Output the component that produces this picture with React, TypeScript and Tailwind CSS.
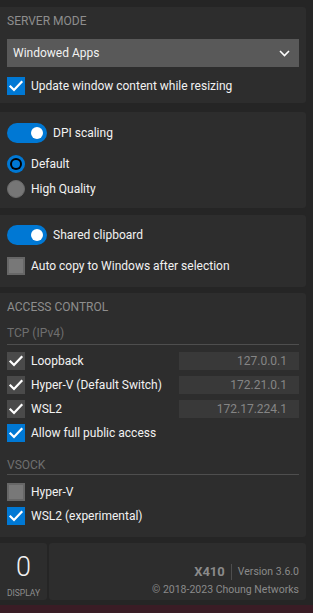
import React from "react";

const font = { fontFamily: 'Roboto, "Noto Sans", sans-serif' };

function Check({ variant }: { variant: "blue" | "dark" | "gray" }) {
  if (variant === "gray") {
    return <div className="w-[18px] h-[18px] shrink-0 bg-[#787878] border-2 border-[#676767]" />;
  }
  return (
    <div className={`w-[18px] h-[18px] shrink-0 flex items-center justify-center ${variant === "blue" ? "bg-[#0078d4]" : "bg-[#4a4a4a]"}`}>
      <svg width="18" height="18" viewBox="0 0 18 18">
        <polyline points="3.5,9.5 7,13 14.5,5" fill="none" stroke="white" strokeWidth="2.2" strokeLinecap="square" />
      </svg>
    </div>
  );
}

function Toggle() {
  return (
    <div className="w-[40px] h-[20px] rounded-full bg-[#0078d4] flex items-center justify-end pr-[4px] shrink-0">
      <div className="w-[12px] h-[12px] rounded-full bg-white" />
    </div>
  );
}

function CheckRow({ variant, label }: { variant: "blue" | "dark" | "gray"; label: string }) {
  return (
    <div className="flex items-center h-[18px] gap-[6px]">
      <Check variant={variant} />
      <span className="text-[12px] text-[#f2f2f2] leading-none">{label}</span>
    </div>
  );
}

function IpRow({ label, ip }: { label: string; ip: string }) {
  return (
    <div className="flex items-center h-[18px]">
      <div className="flex items-center gap-[6px] flex-1">
        <Check variant="dark" />
        <span className="text-[12px] text-[#f2f2f2] leading-none">{label}</span>
      </div>
      <div className="w-[120px] h-[18px] bg-[#393939] flex items-center justify-end pr-[12px] text-[12px] text-[#858585] leading-none">
        {ip}
      </div>
    </div>
  );
}

function Panel({ children, className = "" }: { children: React.ReactNode; className?: string }) {
  return <div className={`bg-[#2d2d2d] rounded-r-[3px] ${className}`}>{children}</div>;
}

export default function App() {
  return (
    <div className="w-[313px] h-[613px] bg-[#252525] flex flex-col overflow-hidden" style={font}>
      <div className="flex flex-col pt-[7px] pr-[7px]">
        <Panel className="px-[7px] pt-[5px] h-[96px]">
          <div className="text-[12px] text-[#8e8e8e] leading-[18px] h-[18px]">SERVER MODE</div>
          <div className="mt-[9px] h-[28px] bg-[#595959] flex items-center justify-between pl-[6px] pr-[9px]">
            <span className="text-[12px] text-[#f2f2f2]">Windowed Apps</span>
            <svg width="11" height="7" viewBox="0 0 11 7">
              <polyline points="1,1 5.5,5.5 10,1" fill="none" stroke="white" strokeWidth="1.6" />
            </svg>
          </div>
          <div className="mt-[10px]">
            <CheckRow variant="blue" label="Update window content while resizing" />
          </div>
        </Panel>

        <Panel className="mt-[9px] px-[7px] pt-[11px] h-[96px]">
          <div className="flex items-center gap-[6px] h-[20px]">
            <Toggle />
            <span className="text-[12px] text-[#f2f2f2]">DPI scaling</span>
          </div>
          <div className="mt-[12px] flex items-center gap-[6px] h-[18px]">
            <div className="w-[18px] h-[18px] rounded-full bg-[#0078d4] flex items-center justify-center">
              <div className="w-[12px] h-[12px] rounded-full bg-black flex items-center justify-center">
                <div className="w-[8px] h-[8px] rounded-full bg-[#0078d4]" />
              </div>
            </div>
            <span className="text-[12px] text-[#f2f2f2]">Default</span>
          </div>
          <div className="mt-[7px] flex items-center gap-[6px] h-[18px]">
            <div className="w-[18px] h-[18px] rounded-full bg-[#767676] border border-[#6a6a6a]" />
            <span className="text-[12px] text-[#f2f2f2]">High Quality</span>
          </div>
        </Panel>

        <Panel className="mt-[7px] px-[7px] pt-[10px] h-[72px]">
          <div className="flex items-center gap-[6px] h-[20px]">
            <Toggle />
            <span className="text-[12px] text-[#f2f2f2]">Shared clipboard</span>
          </div>
          <div className="mt-[12px]">
            <CheckRow variant="gray" label="Auto copy to Windows after selection" />
          </div>
        </Panel>

        <Panel className="mt-[6px] px-[7px] pt-[5px] h-[244px]">
          <div className="text-[12px] text-[#8e8e8e] leading-[18px] h-[18px]">ACCESS CONTROL</div>
          <div className="mt-[8px] text-[12px] text-[#6f6f6f] leading-[18px] h-[18px]">TCP (IPv4)</div>
          <div className="mt-[2px] h-px bg-[#4e4e4e]" />
          <div className="mt-[7px] flex flex-col gap-[6px]">
            <IpRow label="Loopback" ip="127.0.0.1" />
            <IpRow label="Hyper-V (Default Switch)" ip="172.21.0.1" />
            <IpRow label="WSL2" ip="172.17.224.1" />
            <CheckRow variant="blue" label="Allow full public access" />
          </div>
          <div className="mt-[14px] text-[12px] text-[#6f6f6f] leading-[18px] h-[18px]">VSOCK</div>
          <div className="h-px bg-[#4e4e4e]" />
          <div className="mt-[8px] flex flex-col gap-[6px]">
            <CheckRow variant="gray" label="Hyper-V" />
            <CheckRow variant="blue" label="WSL2 (experimental)" />
          </div>
        </Panel>
      </div>

      <div className="flex gap-[2px] pr-[7px] mt-[6px] h-[57px]">
        <div className="w-[47px] bg-[#2d2d2d] rounded-r-[3px] flex flex-col items-center pt-[7px]">
          <div className="text-[27px] leading-[34px] text-[#f2f2f2] font-light">0</div>
          <div className="text-[8.5px] leading-[12px] text-[#8e8e8e] mt-[3px]">DISPLAY</div>
        </div>
        <div className="flex-1 bg-[#2d2d2d] rounded-[3px] flex flex-col items-end justify-end pr-[7px] pb-[2px]">
          <div className="flex items-center">
            <span className="text-[13px] font-bold text-[#8a8a8a] leading-[18px]">X410</span>
            <div className="w-px h-[16px] bg-[#4e4e4e] mx-[6px]" />
            <span className="text-[10.5px] text-[#8a8a8a] leading-[18px]">Version 3.6.0</span>
          </div>
          <div className="text-[10.5px] text-[#8a8a8a] leading-[16px] mt-[1px]">© 2018-2023 Choung Networks</div>
        </div>
      </div>
      <div className="h-[5px]" />
      <div className="flex-1 bg-[#3a1c25]" />
    </div>
  );
}
